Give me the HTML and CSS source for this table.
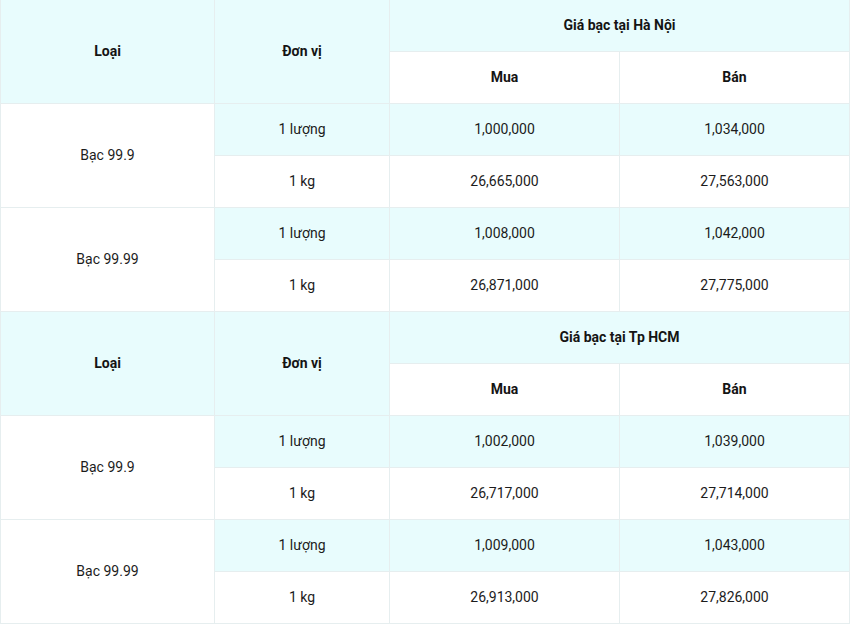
FILE: index.html
```html
<!DOCTYPE html>
<html lang="vi">
<head>
<meta charset="utf-8">
<title>Giá bạc</title>
<link rel="stylesheet" href="styles.css">
</head>
<body>
<table class="price">
  <colgroup>
    <col class="c1"><col class="c2"><col class="c3"><col class="c4">
  </colgroup>
  <tbody>
    <tr class="hd first">
      <th rowspan="2">Loại</th>
      <th rowspan="2">Đơn vị</th>
      <th colspan="2">Giá bạc tại Hà Nội</th>
    </tr>
    <tr class="sub">
      <th>Mua</th>
      <th>Bán</th>
    </tr>
    <tr class="odd">
      <td rowspan="2" class="type">Bạc 99.9</td>
      <td>1 lượng</td><td>1,000,000</td><td>1,034,000</td>
    </tr>
    <tr><td>1 kg</td><td>26,665,000</td><td>27,563,000</td></tr>
    <tr class="odd">
      <td rowspan="2" class="type">Bạc 99.99</td>
      <td>1 lượng</td><td>1,008,000</td><td>1,042,000</td>
    </tr>
    <tr><td>1 kg</td><td>26,871,000</td><td>27,775,000</td></tr>
    <tr class="hd">
      <th rowspan="2">Loại</th>
      <th rowspan="2">Đơn vị</th>
      <th colspan="2">Giá bạc tại Tp HCM</th>
    </tr>
    <tr class="sub">
      <th>Mua</th>
      <th>Bán</th>
    </tr>
    <tr class="odd">
      <td rowspan="2" class="type">Bạc 99.9</td>
      <td>1 lượng</td><td>1,002,000</td><td>1,039,000</td>
    </tr>
    <tr><td>1 kg</td><td>26,717,000</td><td>27,714,000</td></tr>
    <tr class="odd">
      <td rowspan="2" class="type">Bạc 99.99</td>
      <td>1 lượng</td><td>1,009,000</td><td>1,043,000</td>
    </tr>
    <tr><td>1 kg</td><td>26,913,000</td><td>27,826,000</td></tr>
  </tbody>
</table>
</body>
</html>
```

FILE: styles.css
```css
html, body {
  margin: 0;
  padding: 0;
  background: #ffffff;
}
body {
  font-family: Roboto, "Liberation Sans", Arial, sans-serif;
  font-size: 14px;
  color: #1c1c1c;
}
.price {
  border-collapse: collapse;
  width: 849px;
  table-layout: fixed;
}
.c1 { width: 214px; }
.c2 { width: 175px; }
.c3 { width: 230px; }
.c4 { width: 230px; }
.price th, .price td {
  border: 1px solid #e6eeef;
  height: 49px;
  padding: 0 0 2px;
  text-align: center;
  vertical-align: middle;
  background: #ffffff;
}
.price .first th {
  border-top: none;
}
.price th {
  font-weight: 700;
  color: #141414;
}
.hd th { background: #e8fcfd; }
.sub th { background: #ffffff; }
.odd td { background: #e8fcfd; }
.odd td.type { background: #ffffff; }
```
